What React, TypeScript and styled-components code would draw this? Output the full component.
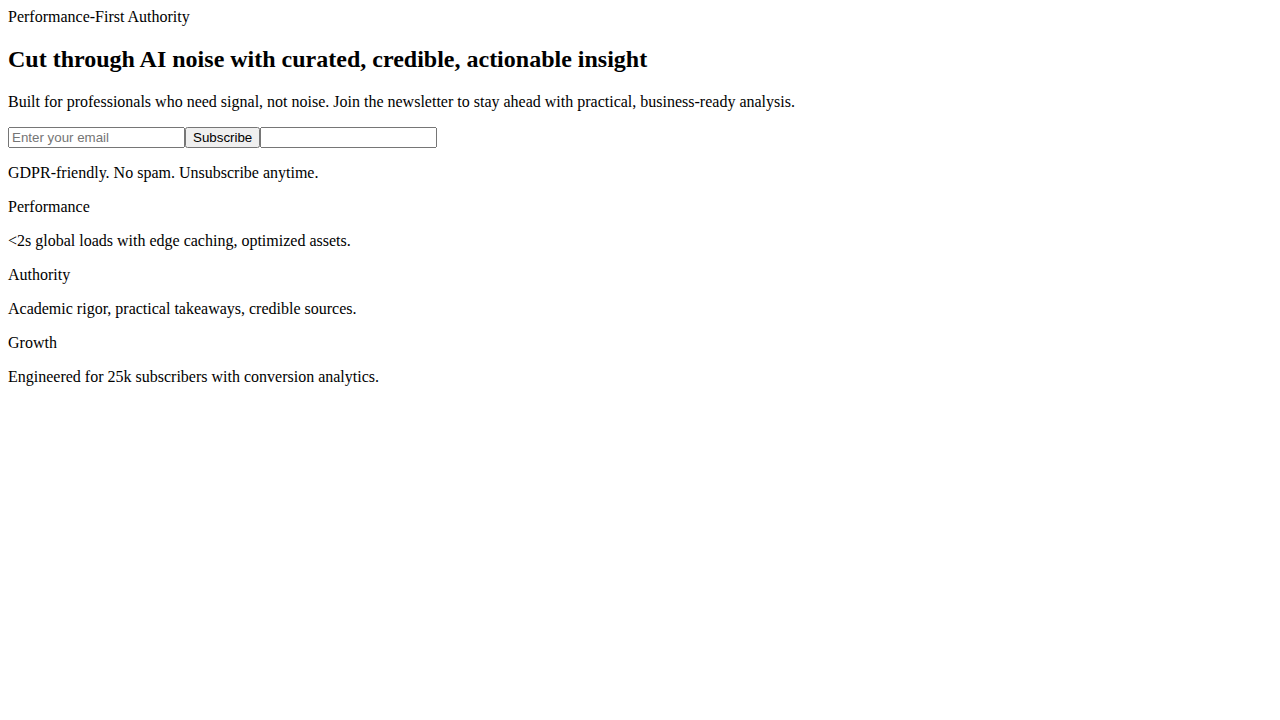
import React from "react";
import styled, { createGlobalStyle } from "styled-components";

const Global = createGlobalStyle`
  body {
    margin: 8px;
    font-family: "Liberation Serif", "Times New Roman", serif;
    font-size: 16px;
    color: #000;
    background: #fff;
  }
`;

const Eyebrow = styled.div`
  font-size: 16px;
`;

const Headline = styled.h2`
  font-size: 24px;
  font-weight: bold;
  margin: 0.83em 0;
`;

const Text = styled.p`
  margin: 16px 0;
`;

const Form = styled.form`
  margin: 0;
`;

const Field = styled.input`
  font-family: "Liberation Sans", Arial, sans-serif;
  font-size: 13.333px;
  box-sizing: border-box;
  width: 177px;
`;

const Button = styled.button`
  font-family: "Liberation Sans", Arial, sans-serif;
  font-size: 13.333px;
`;

const features = [
  { title: "Performance", body: "<2s global loads with edge caching, optimized assets." },
  { title: "Authority", body: "Academic rigor, practical takeaways, credible sources." },
  { title: "Growth", body: "Engineered for 25k subscribers with conversion analytics." },
];

export default function App() {
  return (
    <>
      <Global />
      <Eyebrow>Performance-First Authority</Eyebrow>
      <Headline>Cut through AI noise with curated, credible, actionable insight</Headline>
      <Text>
        Built for professionals who need signal, not noise. Join the newsletter to stay ahead with practical,
        business-ready analysis.
      </Text>
      <Form onSubmit={(e) => e.preventDefault()}>
        <Field type="email" placeholder="Enter your email" />
        <Button type="submit">Subscribe</Button>
        <Field type="text" aria-label="Leave blank" />
      </Form>
      <Text>GDPR-friendly. No spam. Unsubscribe anytime.</Text>
      {features.map((f) => (
        <React.Fragment key={f.title}>
          <Text>{f.title}</Text>
          <Text>{f.body}</Text>
        </React.Fragment>
      ))}
    </>
  );
}
